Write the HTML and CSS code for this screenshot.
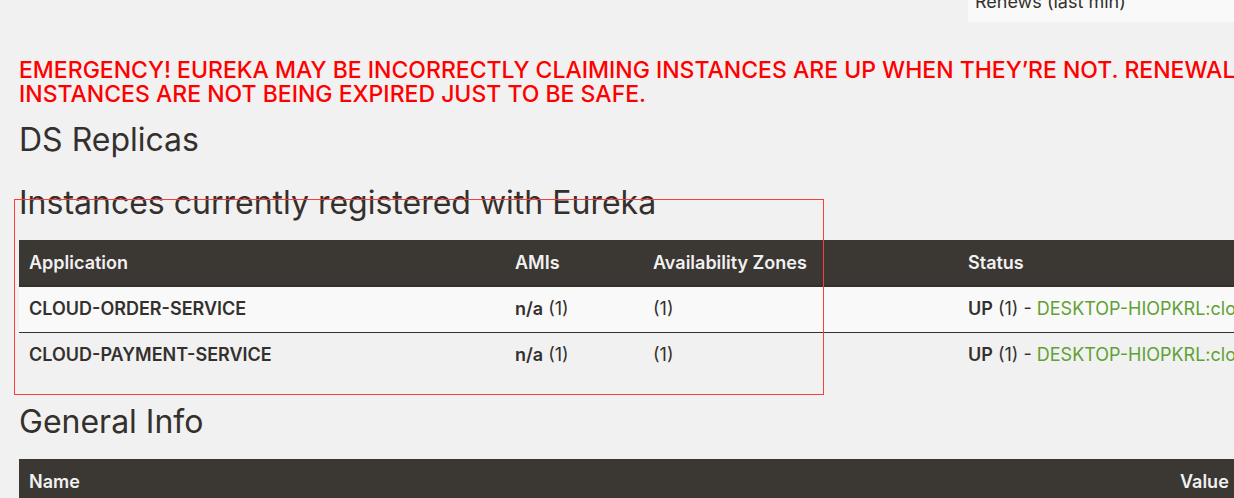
FILE: index.html
```html
<!DOCTYPE html>
<html lang="en">
<head>
<meta charset="utf-8">
<title>Eureka</title>
<link rel="stylesheet" href="styles.css">
</head>
<body>
<main class="page">
  <div class="status-panel">
    <span class="status-label">Renews (last min)</span>
  </div>
  <h4 class="warning">EMERGENCY! EUREKA MAY BE INCORRECTLY CLAIMING INSTANCES ARE UP WHEN THEY’RE NOT. RENEWALS<br>INSTANCES ARE NOT BEING EXPIRED JUST TO BE SAFE.</h4>
  <h1 class="title">DS Replicas</h1>
  <section class="registry">
    <h1 class="title">Instances currently registered with Eureka</h1>
    <table class="grid instances">
      <colgroup><col class="col-app"><col class="col-ami"><col class="col-zone"><col></colgroup>
      <thead>
        <tr><th>Application</th><th>AMIs</th><th>Availability Zones</th><th>Status</th></tr>
      </thead>
      <tbody>
        <tr><td><b>CLOUD-ORDER-SERVICE</b></td><td><b>n/a</b> (1)</td><td>(1)</td><td><b>UP</b> (1) - <a href="#">DESKTOP-HIOPKRL:cloud-order-service:80</a></td></tr>
        <tr><td><b>CLOUD-PAYMENT-SERVICE</b></td><td><b>n/a</b> (1)</td><td>(1)</td><td><b>UP</b> (1) - <a href="#">DESKTOP-HIOPKRL:cloud-payment-service:8001</a></td></tr>
      </tbody>
    </table>
    <div class="marker"></div>
  </section>
  <h1 class="title">General Info</h1>
  <table class="grid info">
    <colgroup><col class="col-name"><col></colgroup>
    <thead>
      <tr><th>Name</th><th>Value</th></tr>
    </thead>
  </table>
</main>
</body>
</html>
```
FILE: styles.css
```css
* {
  box-sizing: border-box;
}

body {
  margin: 0;
  background: #f1f1f1;
  color: #34302d;
  font-family: Inter, "Open Sans", sans-serif;
  font-size: 18px;
  line-height: 26px;
  overflow: hidden;
}

.page {
  padding-left: 19px;
}

.status-panel {
  height: 22px;
  margin-left: 949px;
  padding-left: 7px;
  background: #f9f9f9;
  display: flex;
  align-items: flex-end;
  overflow: hidden;
}

.status-label {
  padding-bottom: 7px;
}

.warning {
  margin: 36px 0 17px;
  color: #ff0000;
  font-size: 23px;
  font-weight: 500;
  line-height: 24px;
  white-space: nowrap;
}

.title {
  margin: 0;
  padding-bottom: 20px;
  font-size: 32px;
  font-weight: 400;
  line-height: 34px;
}

.registry {
  position: relative;
  padding-top: 9px;
  margin-bottom: 27px;
}

.grid {
  width: 100%;
  border-collapse: collapse;
  table-layout: fixed;
}

.grid th {
  height: 46px;
  padding: 0 10px;
  background: #3b3733;
  color: #f1f1f1;
  border-bottom: 2px solid #34302d;
  font-weight: 600;
  text-align: left;
  white-space: nowrap;
}

.grid td {
  height: 46px;
  padding: 0 10px;
  border-top: 1px solid #34302d;
  overflow: hidden;
  white-space: nowrap;
}

.grid tbody tr:first-child {
  background: #f9f9f9;
}

.grid b {
  font-weight: 600;
}

.grid a {
  color: #5fa134;
  text-decoration: none;
}

.col-app {
  width: 40%;
}

.col-ami {
  width: 138px;
}

.col-zone {
  width: 315px;
}

.col-name {
  width: 1151px;
}

.marker {
  position: absolute;
  top: 22px;
  left: -5px;
  width: 810px;
  height: 196px;
  border: 1px solid #ff3b3b;
}
```
